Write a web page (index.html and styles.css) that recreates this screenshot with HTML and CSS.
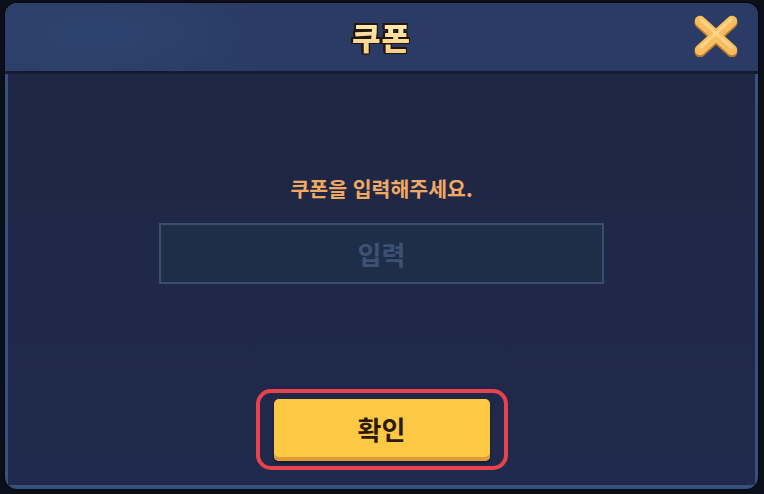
FILE: index.html
```html
<!doctype html>
<html lang="ko">
<head>
  <meta charset="utf-8">
  <title>쿠폰</title>
  <link rel="stylesheet" href="styles.css">
</head>
<body>
<div class="dialog">
  <div class="dialog-head">
    <span></span>
    <h1 class="title">쿠폰</h1>
    <button class="close" aria-label="닫기">
      <svg width="46" height="44" viewBox="0 0 46 44">
        <g stroke-linecap="round" stroke-linejoin="round">
          <path d="M7 8 L39 37 M39 8 L7 37" stroke="#b9772e" stroke-width="11" transform="translate(0 2)"/>
          <path d="M7 8 L39 37 M39 8 L7 37" stroke="#f7bd5f" stroke-width="10.5"/>
          <path d="M8 6.5 L38 34 M38 6.5 L8 34" stroke="#fdd58c" stroke-width="3"/>
        </g>
      </svg>
    </button>
  </div>
  <div class="dialog-body">
    <p class="prompt">쿠폰을 입력해주세요.</p>
    <div class="field">입력</div>
    <div class="highlight">
      <button class="confirm">확인</button>
    </div>
  </div>
</div>
</body>
</html>
```

FILE: styles.css
```css
* {
    margin: 0;
    padding: 0;
    box-sizing: border-box;
}
body {
    width: 764px;
    height: 494px;
    background-color: #0b0f19;
    font-family: "Noto Sans CJK KR", "Noto Sans", sans-serif;
    padding: 3px 6px 5px 5px;
    overflow: hidden;
}
.dialog {
    height: 486px;
    border-radius: 12px;
    background-color: #34517f;
    padding: 0 3px 4px 3px;
    display: flex;
    flex-direction: column;
    overflow: hidden;
    box-shadow: 0 0 0 1px #05070c;
}
.dialog-head {
    height: 71px;
    margin: 0 -3px;
    display: grid;
    grid-template-columns: 1fr auto 1fr;
    align-items: center;
    padding: 0 19px;
    background-color: #2a3c65;
    background-image:
        radial-gradient(ellipse 130px 50px at 110px 30px, rgba(70, 100, 160, 0.12), transparent),
        linear-gradient(90deg, rgba(60, 90, 150, 0.12), transparent 35%);
    border-bottom: 3px solid #131b33;
}
.title {
    font-size: 31px;
    font-weight: 900;
    background: linear-gradient(#fff0c0, #f5cc7a);
    -webkit-background-clip: text;
    -webkit-text-fill-color: transparent;
    filter: drop-shadow(1.5px 0 0 #24160c) drop-shadow(-1.5px 0 0 #24160c) drop-shadow(0 1.5px 0 #24160c) drop-shadow(0 -1.5px 0 #24160c);
    letter-spacing: 1px;
    margin-top: -2px;
}
.close {
    justify-self: end;
    background: none;
    border: 0;
    width: 46px;
    height: 44px;
    margin-top: -4px;
}
.close svg {
    display: block;
}
.dialog-body {
    flex: 1;
    background-color: #1f2848;
    background-image: linear-gradient(#1e2644, #202a4c);
    display: flex;
    flex-direction: column;
    align-items: center;
    padding-top: 100px;
}
.prompt {
    font-size: 20.5px;
    font-weight: 700;
    color: #f2a963;
    line-height: 28px;
}
.field {
    margin-top: 21px;
    width: 445px;
    height: 61px;
    border: 2px solid #3a4e6e;
    background-color: #1e2e49;
    color: #3d5173;
    font-size: 26px;
    font-weight: 700;
    display: flex;
    align-items: center;
    justify-content: center;
}
.highlight {
    margin-top: 105px;
    border: 4px solid #e8434c;
    border-radius: 15px;
    padding: 6px 14px 5px 14px;
}
.confirm {
    display: block;
    width: 216px;
    height: 62px;
    border: 0;
    border-radius: 5px;
    background-color: #fdc944;
    box-shadow: inset 0 -4px 0 #e39b36, 0 2px 3px rgba(0, 0, 0, 0.4);
    color: #2c1a08;
    font-family: "Noto Sans CJK KR", sans-serif;
    font-size: 26px;
    font-weight: 700;
    padding-bottom: 3px;
}
```
